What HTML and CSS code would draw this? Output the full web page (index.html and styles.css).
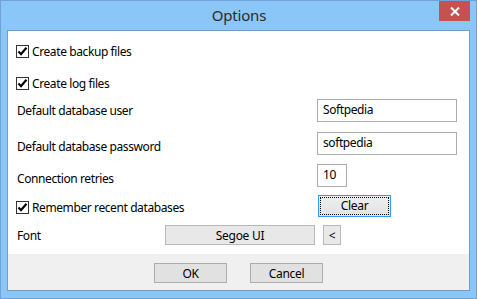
FILE: index.html
```html
<!DOCTYPE html>
<html>
<head>
    <title>Options</title>
    <link rel="stylesheet" href="styles.css">
</head>
<body>
    <div class="window">
        <div class="titlebar">
            <span class="title">Options</span>
            <div class="close-btn">
                <svg width="10" height="9" viewBox="0 0 10 9">
                    <path d="M1 0.5 L9 8.5 M9 0.5 L1 8.5" stroke="#fff" stroke-width="2"/>
                </svg>
            </div>
        </div>

        <div class="client">
            <div class="panel">
                <div class="row">
                    <label class="check"><span class="box"><svg width="11" height="11" viewBox="0 0 11 11"><path d="M1.5 5.5 L4 8.2 L9.5 1.8" fill="none" stroke="#000" stroke-width="2.2"/></svg></span>Create backup files</label>
                </div>
                <div class="row second">
                    <label class="check"><span class="box"><svg width="11" height="11" viewBox="0 0 11 11"><path d="M1.5 5.5 L4 8.2 L9.5 1.8" fill="none" stroke="#000" stroke-width="2.2"/></svg></span>Create log files</label>
                </div>
                <div class="row user">
                    <span class="label">Default database user</span>
                    <div class="textbox">Softpedia</div>
                </div>
                <div class="row pass">
                    <span class="label low">Default database password</span>
                    <div class="textbox">softpedia</div>
                </div>
                <div class="row retries">
                    <span class="label low2">Connection retries</span>
                    <div class="textbox small">10</div>
                </div>
                <div class="row recent">
                    <label class="check low1"><span class="box"><svg width="11" height="11" viewBox="0 0 11 11"><path d="M1.5 5.5 L4 8.2 L9.5 1.8" fill="none" stroke="#000" stroke-width="2.2"/></svg></span>Remember recent databases</label>
                    <button class="btn btn-focus"><span class="focus-rect">Clear</span></button>
                </div>
                <div class="row font-row">
                    <span class="label font-label">Font</span>
                    <button class="btn btn-flat font-btn">Segoe UI</button>
                    <button class="btn btn-flat small-btn">&lt;</button>
                </div>
            </div>
            <div class="footer">
                <button class="btn dlg-btn">OK</button>
                <button class="btn dlg-btn">Cancel</button>
            </div>
        </div>
    </div>
</body>
</html>
```

FILE: styles.css
```css
* {
    box-sizing: border-box;
}

body {
    margin: 0;
    font-family: "Noto Sans", "Open Sans", sans-serif;
    font-size: 12px;
    letter-spacing: -0.4px;
    color: #000;
}

.window {
    position: relative;
    width: 477px;
    height: 299px;
    background: #8bc6f8;
    border: 1px solid #70a2d4;
    padding: 0 6px 7px 6px;
    display: flex;
    flex-direction: column;
}

.titlebar {
    height: 29px;
    display: flex;
    justify-content: center;
    align-items: center;
}

.title {
    font-size: 15px;
    letter-spacing: -0.2px;
    color: #2b2b2b;
    margin-top: -1px;
    margin-left: 1px;
}

.close-btn {
    position: absolute;
    top: 0;
    right: 6px;
    width: 31px;
    height: 20px;
    background: #c75050;
    display: flex;
    justify-content: center;
    align-items: center;
}

.client {
    flex: 1;
    border: 1px solid #6e9dcc;
    display: flex;
    flex-direction: column;
}

.panel {
    background: #fff;
    height: 223px;
    padding: 9px 0 0 8px;
    display: flex;
    flex-direction: column;
}

.row {
    display: flex;
    align-items: center;
    height: 23px;
}

.row.second {
    margin-top: 9px;
}

.row.user {
    margin-top: 4px;
}

.row.pass {
    margin-top: 10px;
}

.row.retries {
    margin-top: 9px;
}

.row.recent {
    margin-top: 8px;
    height: 22px;
}

.font-row {
    margin-top: 8px;
    height: 20px;
}

.check {
    display: flex;
    align-items: center;
    gap: 3px;
    width: 301px;
}

.box {
    width: 13px;
    height: 13px;
    border: 1px solid #333;
    background: #fff;
    display: flex;
}

.label {
    width: 301px;
    padding-left: 1px;
}

.font-label {
    width: 149px;
}

.low {
    margin-top: 6px;
}

.low2 {
    margin-top: 5px;
}

.low1 {
    margin-top: 3px;
}

.textbox {
    width: 140px;
    height: 23px;
    border: 1px solid #abadb3;
    padding: 0 0 0 5px;
    line-height: 20px;
}

.textbox.small {
    width: 30px;
}

.btn {
    font-family: inherit;
    font-size: 12px;
    letter-spacing: -0.3px;
    color: #000;
    padding: 0;
    margin: 0;
    height: 20px;
    background: #e1e1e1;
    border: 1px solid #adadad;
}

.btn-focus {
    width: 73px;
    height: 22px;
    margin-left: 1px;
    border: 1px solid #3399ff;
    background: linear-gradient(#eeeeee, #e3e3e3);
    padding: 1px;
}

.focus-rect {
    display: block;
    height: 100%;
    border: 1px dotted #000;
    line-height: 16px;
}

.btn-flat {
    background: #e8e8e8;
    border: 1px solid #b9b9b9;
}

.font-btn {
    width: 150px;
}

.small-btn {
    width: 18px;
    margin-left: 8px;
}

.footer {
    flex: 1;
    background: #f0f0f0;
    display: flex;
    justify-content: center;
    gap: 23px;
    padding-top: 9px;
}

.dlg-btn {
    width: 73px;
}
```
